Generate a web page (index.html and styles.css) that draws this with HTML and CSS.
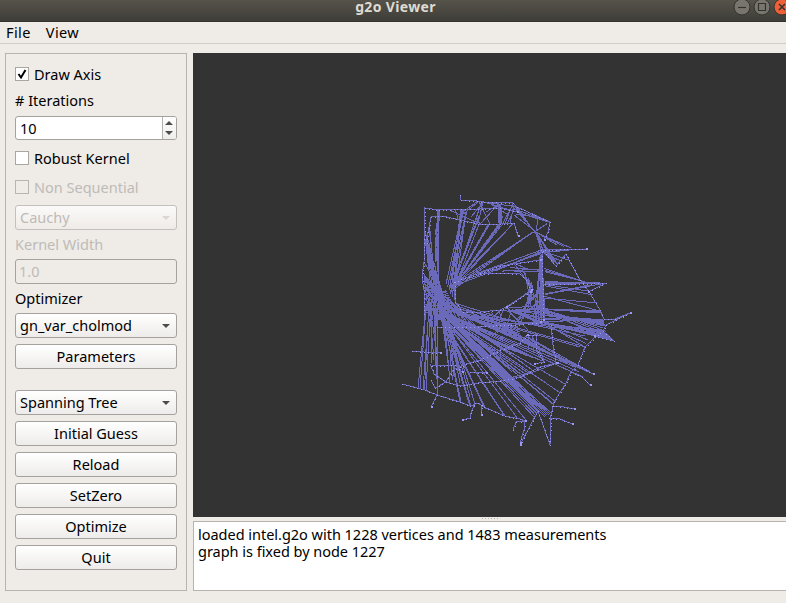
FILE: index.html
```html
<!DOCTYPE html>
<html lang="en">
<head>
<meta charset="utf-8">
<title>g2o Viewer</title>
<link rel="stylesheet" href="styles.css">
</head>
<body>
<div class="window">
  <header class="titlebar">
    <h1>g2o Viewer</h1>
    <div class="controls">
      <svg width="18" height="18" viewBox="0 0 18 18"><circle class="ctl" cx="9" cy="9" r="8"/><path class="glyph" d="M5 9.500h8"/></svg>
      <svg width="18" height="18" viewBox="0 0 18 18"><circle class="ctl" cx="9" cy="9" r="8"/><path class="glyph" d="M5.500 5.500h7v7h-7z"/></svg>
      <svg width="18" height="18" viewBox="0 0 18 18"><circle class="ctl close" cx="9" cy="9" r="8"/><path class="glyph cross" d="M6 6l6 6M12 6l-6 6"/></svg>
    </div>
  </header>
  <nav class="menubar"><span>File</span><span>View</span></nav>
  <main class="content">
    <aside class="panel">
      <label class="check first"><i class="box on"><svg width="12" height="12" viewBox="0 0 12 12"><path d="M2.500 6l2.500 3.500L9.500 2"/></svg></i><span>Draw Axis</span></label>
      <div class="label iter"><span>#&nbsp;Iterations</span></div>
      <div class="field spin"><span>10</span><div class="steps"><i class="up"></i><i class="down"></i></div></div>
      <label class="check robust"><i class="box"></i><span>Robust Kernel</span></label>
      <label class="check seq off"><i class="box"></i><span>Non Sequential</span></label>
      <div class="button combo cauchy off"><span>Cauchy</span><i class="down"></i></div>
      <div class="label width off"><span>Kernel Width</span></div>
      <div class="field value off"><span>1.0</span></div>
      <div class="label opt"><span>Optimizer</span></div>
      <div class="button combo solver"><span>gn_var_cholmod</span><i class="down"></i></div>
      <div class="button"><span>Parameters</span></div>
      <div class="button combo tree"><span>Spanning Tree</span><i class="down"></i></div>
      <div class="button"><span>Initial Guess</span></div>
      <div class="button"><span>Reload</span></div>
      <div class="button"><span>SetZero</span></div>
      <div class="button"><span>Optimize</span></div>
      <div class="button"><span>Quit</span></div>
    </aside>
    <section class="work">
      <svg class="viewer" viewBox="193 53 593 464" width="593" height="464"><path id="edges"/><path id="poses"/></svg>
      <div class="splitter"></div>
      <div class="log">loaded intel.g2o with 1228 vertices and 1483 measurements<br>graph is fixed by node 1227</div>
    </section>
  </main>
</div>
<script src="graph.js"></script>
</body>
</html>
```
FILE: graph.js
```js
// Each bundle joins segment A (x1,y1,x2,y2) to segment B (x3,y3,x4,y4) with n edges.
const bundles = [
  [438,210,440,210, 435,250,438,284, 4],
  [438,212,439,215, 435,235,435,262, 3],
  [425,225,426,250, 431,288,440,300, 5],
  [430,218,428,250, 434,285,440,305, 5],
  [425,230,427,250, 436,280,438,290, 4],
  [424,255,424,312, 438,285,450,322, 11],
  [424,275,425,316, 446,290,455,310, 11],
  [434,262,439,284, 430,320,450,320, 9],
  [460,210,464,210, 446,284,454,300, 6],
  [464,212,470,212, 450,285,456,286, 3],
  [478,206,480,224, 450,288,456,284, 4],
  [487,224,490,224, 452,288,456,284, 3],
  [496,224,503,224, 450,292,458,281, 7],
  [512,224,514,224, 455,286,457,281, 2],
  [531,231,535,235, 450,292,458,281, 3],
  [540,250,541,254, 456,285,478,273, 3],
  [542,251,542,253, 500,268,495,271, 3],
  [484,202,478,201, 478,223,464,211, 3],
  [478,201,484,202, 462,215,490,224, 3],
  [498,203,501,204, 498,223,502,224, 5],
  [478,222,500,203, 486,212,480,224, 2],
  [484,202,501,204, 498,222,517,207, 5],
  [513,203,518,208, 503,223,510,223, 4],
  [440,211,461,210, 458,219,478,223, 2],
  [515,206,518,210, 533,230,537,235, 5],
  [514,208,516,215, 538,217,548,222, 3],
  [514,215,518,207, 534,230,526,222, 3],
  [538,217,548,224, 533,233,536,231, 2],
  [534,229,538,235, 541,252,545,254, 4],
  [535,231,538,234, 571,248,557,245, 3],
  [536,232,540,238, 558,265,550,258, 4],
  [541,250,542,254, 575,249,586,249, 4],
  [541,250,545,254, 568,260,556,263, 3],
  [540,255,542,254, 533,322,545,322, 8],
  [542,262,543,272, 539,310,545,318, 5],
  [519,265,530,280, 533,290,531,305, 4],
  [530,278,534,290, 534,300,520,325, 5],
  [541,285,541,300, 525,305,515,323, 5],
  [504,310,506,308, 531,290,540,322, 3],
  [500,272,515,265, 541,272,543,269, 3],
  [519,264,510,263, 530,270,534,290, 2],
  [544,265,545,272, 580,280,588,283, 3],
  [545,281,545,285, 588,283,606,283, 4],
  [545,285,545,302, 590,285,606,283, 2],
  [544,282,545,287, 588,291,593,295, 2],
  [544,295,545,299, 600,311,597,303, 2],
  [455,303,460,312, 515,322,520,332, 3],
  [470,314,480,312, 500,324,520,334, 4],
  [478,314,510,310, 505,328,495,335, 4],
  [505,311,510,310, 543,318,545,325, 4],
  [500,311,520,309, 543,310,545,315, 4],
  [500,310,512,312, 528,330,485,325, 3],
  [480,325,515,325, 540,323,545,322, 4],
  [455,308,457,316, 585,336,601,330, 3],
  [530,308,545,310, 598,311,602,313, 6],
  [540,310,545,322, 603,319,605,326, 8],
  [540,321,545,324, 603,331,614,341, 8],
  [542,308,545,314, 603,328,614,341, 5],
  [545,322,547,326, 585,347,588,340, 3],
  [450,306,456,318, 580,347,586,347, 2],
  [440,302,452,316, 589,371,593,374, 5],
  [438,308,450,316, 583,377,575,367, 3],
  [500,328,530,338, 570,365,593,374, 3],
  [440,310,450,318, 556,402,565,384, 3],
  [436,308,450,318, 550,401,554,405, 6],
  [436,310,450,320, 545,417,551,413, 6],
  [434,310,448,322, 534,417,540,410, 5],
  [434,310,446,322, 504,415,505,416, 2],
  [434,310,446,322, 518,419,526,420, 2],
  [434,308,445,320, 484,407,486,409, 4],
  [438,306,446,320, 469,403,471,406, 3],
  [440,306,444,320, 460,402,461,402, 2],
  [425,300,426,315, 418,388,420,389, 2],
  [427,302,431,312, 423,389,426,390, 3],
  [432,304,439,316, 436,365,438,395, 4],
  [439,306,447,316, 446,340,450,382, 4],
  [446,308,448,320, 455,376,475,404, 5],
  [428,298,432,310, 431,366,437,354, 3],
  [424,275,440,290, 425,312,462,328, 12],
  [440,290,455,305, 434,320,478,328, 13],
  [450,308,460,316, 512,330,545,350, 8],
  [446,312,455,324, 510,350,545,362, 7],
  [447,314,455,324, 500,370,530,374, 6],
  [460,325,475,328, 500,345,535,372, 4],
  [525,335,534,335, 528,350,544,360, 4],
  [446,382,453,380, 450,355,455,366, 2],
  [500,380,522,378, 528,373,557,363, 2]
];

// Robot trajectories: the nodes along them are drawn brighter.
const tracks = [
  [460,195,461,200,477,201,484,202,513,203,517,207,550,222,548,232,544,240],
  [424,314,424,290,422,277,424,262,425,208,439,210,461,209,478,209,500,208,517,212],
  [427,243,428,232,431,217,442,216,460,220,478,224,500,224,514,223,518,236],
  [454,282,480,273,500,266,520,263,540,260],[480,274,500,273,520,274,526,280,531,290],
  [455,282,455,302,463,312,480,312,500,310,506,307],[506,307,530,292],
  [541,250,571,249,586,249],[543,251,556,266,566,254,569,260,580,280,588,290,600,310,604,319,615,319,630,313],
  [545,284,575,284,606,283,588,292],[626,315,606,325,603,331,614,341,594,336],
  [603,331,595,337,585,347,578,365,571,372,565,385,554,402,551,415,550,445,538,411,520,445],
  [552,406,564,407,574,409],[549,418,560,419,572,424],[513,430,516,422,525,421,524,430,520,443],
  [402,384,425,390,437,395,460,402,470,406,478,403,484,407,505,416,520,419,525,421],
  [412,351,424,352,440,353],[437,395,431,407],[475,403,471,413,470,418,462,420],[482,405,481,415],
  [431,366,434,374,446,382,460,386,478,383,500,381,520,377,540,367,557,363],
  [431,380,435,388,446,382,453,370,466,364,480,360,500,350,520,343,527,335],
  [437,327,470,327,500,325,515,325,540,322],[551,325,553,345,556,363],
  [526,335,536,335,536,348,544,362,534,364],[432,366,455,365,462,372],[470,372,486,373],
  [571,372,582,377,590,385],[578,365,593,374],[542,252,542,270,543,300,543,320]
];

let seed = 7;
const random = () => (seed = (seed * 16807) % 2147483647) / 2147483647;

let edges = "";
for (const [a, b, c, d, e, f, g, h, n] of bundles) {
  for (let i = 0; i < n; i++) {
    const t = n > 1 ? i / (n - 1) : 0;
    const s = random();
    edges += `M${(a + (c - a) * s).toFixed(1)} ${(b + (d - b) * s).toFixed(1)}L${(e + (g - e) * t).toFixed(1)} ${(f + (h - f) * t).toFixed(1)}`;
  }
}

let poses = "";
for (const t of tracks) {
  edges += "M" + t.join(" ");
  for (let i = 0; i + 3 < t.length; i += 2) {
    const dx = t[i + 2] - t[i], dy = t[i + 3] - t[i + 1];
    const steps = Math.max(1, Math.round(Math.hypot(dx, dy) / 4));
    for (let k = 0; k <= steps; k++) {
      poses += `M${Math.round(t[i] + dx * k / steps)} ${Math.round(t[i + 1] + dy * k / steps)}h1v1h-1z`;
    }
  }
  const m = t.length;
  poses += `M${t[m - 2]} ${t[m - 1] - 1}h2v2h-2z`;
}
document.getElementById("edges").setAttribute("d", edges);
document.getElementById("poses").setAttribute("d", poses);
```
FILE: styles.css
```css
* { box-sizing: border-box; }
body { margin: 0; background: #efebe7; color: #000; font: 14.5px/17px "Noto Sans", "Open Sans", sans-serif; overflow: hidden; }
.window { width: 786px; height: 603px; display: flex; flex-direction: column; }
.titlebar { height: 22px; flex: none; display: grid; grid-template-columns: 340px 111px 1fr; background: linear-gradient(#56534a, #3e3d38); border-bottom: 1px solid #33322e; }
.titlebar h1 { grid-column: 2; margin: 0; font-size: 14px; line-height: 14px; letter-spacing: 0.35px; font-weight: 700; color: #dfdbd2; text-align: center; white-space: nowrap; }
.controls { display: flex; justify-content: flex-end; gap: 2px; margin-right: -5px; margin-top: -2px; }
.controls svg { display: block; flex: none; }
.ctl { fill: #77756e; stroke: #34332e; }
.close { fill: #ef6038; }
.glyph { fill: none; stroke: #34332e; stroke-width: 1.2; }
.cross { stroke-width: 1.6; }
.menubar { height: 22px; flex: none; display: flex; gap: 15px; padding: 1px 6px 0; border-bottom: 1px solid #d0ccc6; }
.menubar span { line-height: 18px; letter-spacing: 0.4px; }
.content { flex: 1; display: flex; padding: 9px 0 12px 5px; gap: 6px; min-height: 0; }
.panel { width: 182px; flex: none; border: 1px solid #b7b3ae; padding: 0 9px; display: flex; flex-direction: column; }
.panel span { white-space: nowrap; }
.check, .label { height: 17px; flex: none; display: flex; align-items: center; }
.check { gap: 5px; }
.first { margin-top: 12px; }
.iter { margin-top: 9px; }
.robust { margin-top: 9px; }
.seq { margin-top: 12px; }
.box { width: 14px; height: 14px; border: 1px solid #aaa6a1; background: #fff; display: block; flex: none; margin-bottom: 2px; }
.box svg { display: block; }
.box path { fill: none; stroke: #000; stroke-width: 2; }
.off { color: #bebbb7; }
.off .box { background: #efebe7; border-color: #b8b4ae; }
.field, .button { height: 25px; flex: none; border: 1px solid #a5a19c; border-radius: 3px; display: flex; align-items: center; }
.field { background: #fff; padding-left: 4px; justify-content: space-between; overflow: hidden; }
.spin { margin-top: 7px; height: 24px; margin-bottom: 1px; }
.steps { width: 14px; height: 100%; border-left: 1px solid #b5b1ac; display: flex; flex-direction: column; align-items: center; justify-content: space-between; padding: 4px 1px 4px 0; background: linear-gradient(#fff, #efedeb); }
.up, .down { width: 0; height: 0; border: 4px solid transparent; }
.up { border-top: 0; border-bottom-color: #4c4c4c; }
.down { border-bottom: 0; border-top-color: #4c4c4c; }
.button { margin-bottom: 6px; background: linear-gradient(#fff, #eeecea); justify-content: center; }
.combo { justify-content: space-between; padding: 0 6px 0 4px; }
.cauchy { margin: 9px 0 0; border-color: #c4c0bb; background: linear-gradient(#fbfaf9, #efebe7); }
.cauchy .down { border-top-color: #dad7d3; }
.width { margin-top: 6px; }
.value { background: #efebe7; padding-left: 3px; margin-top: 6px; }
.opt { margin-top: 6px; }
.solver { margin-top: 6px; }
.tree { margin-top: 15px; }
.work { flex: 1; display: flex; flex-direction: column; min-width: 0; }
.viewer { display: block; flex: none; background: #333; }
#edges { fill: none; stroke: #6b69b9; stroke-width: 1; shape-rendering: crispEdges; }
#poses { fill: #9b99f5; shape-rendering: crispEdges; }
.splitter { height: 4px; flex: none; width: 17px; margin-left: 289px; background: repeating-linear-gradient(90deg, #b5b1ac 0 1px, transparent 1px 3px) 0 1px / 17px 1px no-repeat; }
.log { height: 70px; flex: none; background: #fff; border: 1px solid #b7b3ae; border-right: 0; padding: 4px 4px; white-space: nowrap; letter-spacing: -0.02px; }
```
